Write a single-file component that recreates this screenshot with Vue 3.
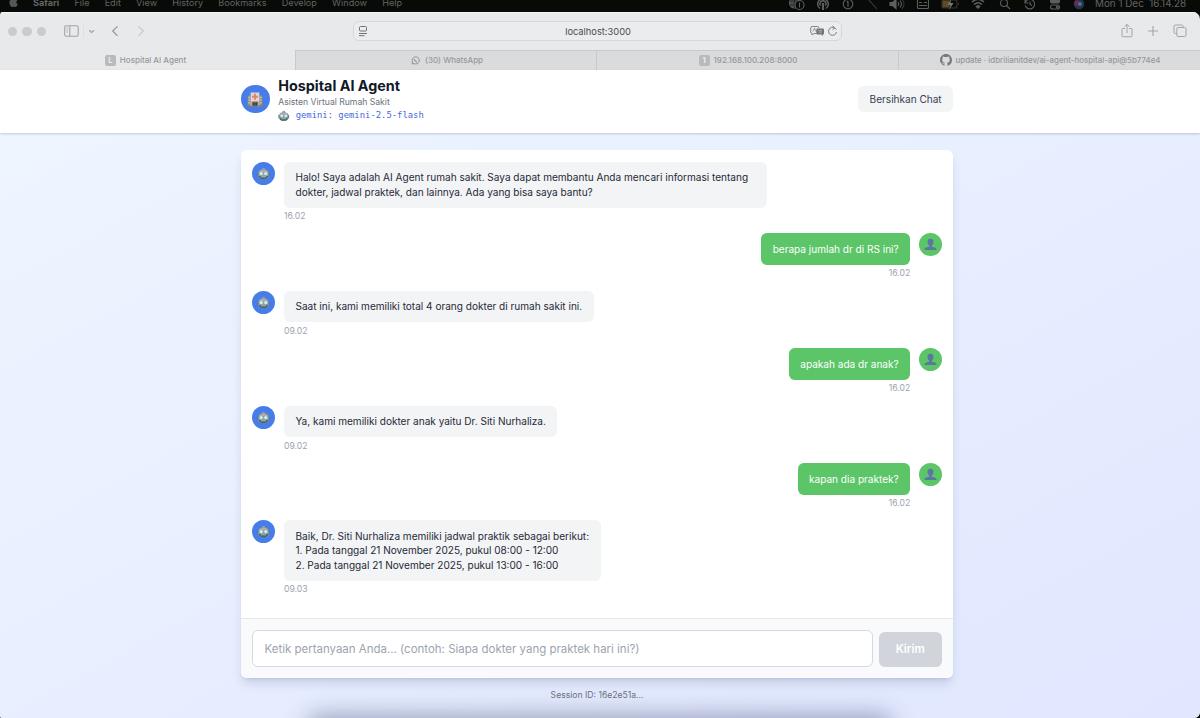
<script setup>
import { ref } from 'vue';

const menus = ['Safari', 'File', 'Edit', 'View', 'History', 'Bookmarks', 'Develop', 'Window', 'Help'];

const statusIcons = [
    { name: 'globe', width: 27 },
    { name: 'podcast', width: 26 },
    { name: 'info', width: 24 },
    { name: 'slash', width: 24 },
    { name: 'volume', width: 26 },
    { name: 'keyboard', width: 26 },
    { name: 'battery', width: 28 },
    { name: 'wifi', width: 28 },
    { name: 'search', width: 25 },
    { name: 'history', width: 25 },
    { name: 'control', width: 25 },
    { name: 'siri', width: 24 },
];

const input = ref('');

const messages = ref([
    {
        id: 0,
        from: 'bot',
        message: 'Halo! Saya adalah AI Agent rumah sakit. Saya dapat membantu Anda mencari informasi tentang dokter, jadwal praktek, dan lainnya. Ada yang bisa saya bantu?',
        time: '16.02',
    },
    { id: 1, from: 'user', message: 'berapa jumlah dr di RS ini?', time: '16.02' },
    { id: 2, from: 'bot', message: 'Saat ini, kami memiliki total 4 orang dokter di rumah sakit ini.', time: '09.02' },
    { id: 3, from: 'user', message: 'apakah ada dr anak?', time: '16.02' },
    { id: 4, from: 'bot', message: 'Ya, kami memiliki dokter anak yaitu Dr. Siti Nurhaliza.', time: '09.02' },
    { id: 5, from: 'user', message: 'kapan dia praktek?', time: '16.02' },
    {
        id: 6,
        from: 'bot',
        message: 'Baik, Dr. Siti Nurhaliza memiliki jadwal praktik sebagai berikut:\n1. Pada tanggal 21 November 2025, pukul 08:00 - 12:00\n2. Pada tanggal 21 November 2025, pukul 13:00 - 16:00',
        time: '09.03',
    },
]);

const sendMessage = () => {
    if (!input.value) return;
    messages.value.push({
        id: messages.value.length,
        from: 'user',
        message: input.value,
        time: new Date().toTimeString().slice(0, 5).replace(':', '.'),
    });
    input.value = '';
};

const clearChat = () => {
    messages.value = messages.value.slice(0, 1);
};
</script>

<template>
    <div class="screen">
        <svg class="symbols" width="0" height="0">
            <symbol id="robot" viewBox="0 0 24 24">
                <path d="M9 4.500q0-3 3-3t3 3V7H9z" fill="#a9979a" />
                <rect x=".8" y="10" width="4" height="7.500" rx="1.500" fill="#5d717c" />
                <rect x="19.200" y="10" width="4" height="7.500" rx="1.500" fill="#5d717c" />
                <path d="M2.500 12C2.500 6.500 5 4.500 12 4.500s9.500 2 9.500 7.500v3.500c0 5-2.500 7-9.500 7s-9.500-2-9.500-7z" fill="#8aa5a8" />
                <path d="M4.500 9C6 6.200 8.500 5.500 12 5.500s6 .7 7.500 3.500z" fill="#b3aeae" />
                <circle cx="7.800" cy="12.200" r="3" fill="#d3efec" />
                <circle cx="16.200" cy="12.200" r="3" fill="#d3efec" />
                <path d="M3.300 16.500h17.400c-.8 4.200-3.200 6-8.700 6s-7.900-1.800-8.700-6z" fill="#4c6067" />
                <path d="M7 16.800h10v2.400H7z" fill="#93adae" />
            </symbol>
            <symbol id="user" viewBox="0 0 24 24">
                <path d="M12 1.500c4.300 0 5.800 2.800 5.500 6.300-.2 2.700-1.500 4.800-3 5.900v2.300l6.500 2c1.600.6 2 1.700 2 4H1c0-2.300.4-3.400 2-4l6.500-2v-2.300c-1.500-1.100-2.800-3.200-3-5.900C6.200 4.300 7.700 1.500 12 1.500z" fill="#5b76a0" />
            </symbol>
        </svg>

        <div class="menubar">
            <svg class="menubar__apple" viewBox="0 0 12 14">
                <path d="M8.200 0c.1 1.500-1 2.800-2.300 2.900C5.800 1.500 7 .2 8.200 0zM6.100 3.600c.6 0 1.400-.6 2.500-.6 1.200 0 2 .7 2.500 1.400-2 1.200-1.700 4 .5 4.800C11 11 9.800 13 8.600 13c-.9 0-1.200-.5-2.300-.5S4.900 13 4.100 13C2.600 13 .5 9.600.5 6.900.5 4.400 2 3 3.800 3c1 0 1.700.6 2.300.6z" fill="#555" />
            </svg>
            <span v-for="menu in menus" :key="menu" class="menubar__item">{{ menu }}</span>
            <div class="menubar__status">
                <span v-for="icon in statusIcons" :key="icon.name" class="menubar__icon" :style="{ width: icon.width + 'px' }">
                    <svg width="20" height="14" viewBox="0 0 20 14" fill="none" stroke="#5e5e5e" stroke-width="1.100">
                        <g v-if="icon.name === 'globe'">
                            <circle cx="7.500" cy="6" r="5" fill="#4a4a4a" />
                            <path d="M3 4h9M3 8h9M7.500 1v10" stroke="#111" stroke-width=".6" />
                            <circle cx="12.500" cy="8" r="4.500" fill="#080a07" />
                            <path d="M12.500 5.500v5" />
                        </g>
                        <g v-else-if="icon.name === 'podcast'">
                            <path d="M7 11.500A5.300 5.300 0 1 1 13 11.500M7.700 8.500a2.900 2.900 0 1 1 4.600 0" stroke-width="1.500" />
                            <path d="M10 6v7" stroke-width="2.200" />
                        </g>
                        <g v-else-if="icon.name === 'info'">
                            <circle cx="10" cy="7" r="4.800" />
                            <path d="M10 4v6M8.800 5l1.200-1" />
                        </g>
                        <path v-else-if="icon.name === 'slash'" d="M6 2l9 10" stroke="#3a3a3a" />
                        <g v-else-if="icon.name === 'volume'">
                            <path d="M3 5.500h2.500l3.500-3v9L5.500 8.500H3z" fill="#5e5e5e" />
                            <path d="M11 5q1.500 2 0 4M13 3.500q2.800 3.500 0 7" />
                            <path d="M15 2q4 5 0 10" stroke="#333" />
                        </g>
                        <g v-else-if="icon.name === 'keyboard'">
                            <rect x="4.500" y="2.500" width="11" height="9" rx="1" />
                            <path d="M6 5.500h3M11 5.500h3M6 8.500h8" />
                        </g>
                        <g v-else-if="icon.name === 'battery'">
                            <rect x="2" y="3" width="15" height="8" rx="2" stroke="#333" />
                            <rect x="2.500" y="3.500" width="7" height="7" fill="#5d4b24" stroke="none" />
                            <path d="M11 2L7.500 8h3L9 13l4.500-7h-3z" fill="#777" stroke="none" />
                            <path d="M18.500 6v2" stroke="#333" />
                        </g>
                        <path v-else-if="icon.name === 'wifi'" d="M4 5q6-5.500 12 0M6 7.500q4-3.500 8 0M8.500 9.500q1.500-1.500 3 0L10 11z" stroke-width="1.500" />
                        <g v-else-if="icon.name === 'search'">
                            <circle cx="9" cy="6" r="3.500" />
                            <path d="M11.500 8.500l3.500 3.500" />
                        </g>
                        <g v-else-if="icon.name === 'history'">
                            <path d="M5.500 5a4.800 4.800 0 1 1-.3 3.500M5 2.500V6h3.300" />
                            <path d="M10 4.500v3l2 1" />
                        </g>
                        <g v-else-if="icon.name === 'control'">
                            <rect x="5.500" y="2" width="9" height="4" rx="2" fill="#5e5e5e" />
                            <rect x="5.500" y="8" width="9" height="4" rx="2" />
                            <circle cx="12.300" cy="10" r="1" />
                        </g>
                        <g v-else stroke="none">
                            <circle cx="10" cy="7" r="5.200" fill="#27334e" />
                            <circle cx="8" cy="6" r="2.800" fill="#652e4c" />
                            <circle cx="11" cy="7" r="2" fill="#48708a" />
                        </g>
                    </svg>
                </span>
                <span class="menubar__clock">Mon 1 Dec&nbsp; 16.14.28</span>
            </div>
        </div>

        <div class="window">
            <div class="toolbar">
                <div class="toolbar__left">
                    <i class="dot"></i>
                    <i class="dot"></i>
                    <i class="dot"></i>
                    <svg class="toolbar__nav" width="90" height="16" viewBox="0 0 90 16" fill="none" stroke="#a3a4a6" stroke-width="1.100">
                        <rect x=".7" y="2.700" width="13.500" height="10.600" rx="1.500" />
                        <path d="M5.800 3v10" />
                        <path d="M2.400 5h1.700M2.400 7h1.700M2.400 9h1.700" stroke-width=".7" />
                        <path d="M19.500 1v14" stroke="#dcdddf" stroke-width=".8" />
                        <path d="M25.200 7.200l2.400 2.200 2.400-2.200" stroke-width="1.300" />
                        <path d="M53.500 3.300L48.700 8l4.800 4.800" stroke="#8f9092" stroke-width="1.100" />
                        <path d="M74.500 3.300L79.300 8l-4.800 4.800" stroke="#c6c7c9" stroke-width="1.100" />
                    </svg>
                </div>
                <div class="address">
                    <svg width="10" height="12" viewBox="0 0 10 12" fill="none" stroke="#717274">
                        <rect x="1.500" y="1.500" width="7" height="4.500" rx="1" />
                        <path d="M1 8.500h8M1 10.700h5.500" />
                    </svg>
                    <span class="address__url">localhost:3000</span>
                    <svg width="28" height="12" viewBox="0 0 28 12" fill="none" stroke="#7a7b7d">
                        <path d="M6.500 8.500H4L2 10V8.500A1.500 1.500 0 0 1 .700 7V3A1.500 1.500 0 0 1 2 1.500h5.500A1.300 1.300 0 0 1 8.800 3" stroke-width=".9" />
                        <path d="M3 6.500l1.500-3.500L6 6.500" stroke-width=".7" />
                        <path d="M7.500 3.500h5.300q1.200 0 1.200 1.200v3.600q0 1.200-1.200 1.200V11l-1.600-1.500H7.500q-1.200 0-1.200-1.200V4.700q0-1.200 1.200-1.200z" fill="#717274" stroke="none" />
                        <path d="M8 5.500h4.500M10.200 4.500v1M8.500 8.300q2.500-.8 3-2.800M9 6q.6 1.700 3 2.300" stroke="#bfc0c2" stroke-width=".5" />
                        <path d="M26.200 4.600A4 4 0 1 0 26.500 7M22.500.8l2.200 2-2.200 2" />
                    </svg>
                </div>
                <div class="toolbar__right">
                    <svg width="12" height="16" viewBox="0 0 12 16" fill="none" stroke="#a3a4a6">
                        <path d="M4 5.500H1.700Q1 5.500 1 6.300v6.500q0 1 .9 1h8.200q.9 0 .9-1V6.300q0-.8-.8-.8H8M6 10V1.500M3.600 3.700L6 1.300l2.400 2.400" />
                    </svg>
                    <svg width="12" height="16" viewBox="0 0 12 16" fill="none" stroke="#a3a4a6" stroke-width="1.100">
                        <path d="M6 3v10M1 8h10" />
                    </svg>
                    <svg width="14" height="16" viewBox="0 0 14 16" fill="none" stroke="#a3a4a6">
                        <path d="M3.500 10.500H2.300Q1 10.500 1 9.200V3.300Q1 2 2.300 2h6.400Q10 2 10 3.300v1" />
                        <rect x="3.800" y="4.500" width="9.200" height="9" rx="1.400" />
                    </svg>
                </div>
            </div>

            <div class="tabs">
                <div class="tab tab--active">
                    <span class="tab__badge">L</span>
                    <span class="tab__title">Hospital AI Agent</span>
                </div>
                <div class="tab tab--whatsapp">
                    <svg width="9" height="9" viewBox="0 0 9 9" fill="none" stroke="#949597">
                        <path d="M1 8l.6-1.800a3.600 3.600 0 1 1 1.300 1.300z" />
                        <path d="M3.100 3q.3 2.300 2.800 3" stroke-width="1.300" />
                    </svg>
                    <span class="tab__title">(30) WhatsApp</span>
                </div>
                <div class="tab tab--ip">
                    <span class="tab__badge">1</span>
                    <span class="tab__title">192.168.100.208:8000</span>
                </div>
                <div class="tab tab--github">
                    <svg width="12" height="12" viewBox="0 0 16 16" fill="#77787a">
                        <path d="M8 0C3.580 0 0 3.580 0 8c0 3.540 2.290 6.530 5.470 7.590.4.070.55-.17.55-.38 0-.19-.01-.82-.01-1.490-2.010.37-2.530-.49-2.690-.94-.09-.23-.48-.94-.82-1.130-.28-.15-.68-.52-.01-.53.63-.01 1.080.58 1.230.82.72 1.210 1.870.87 2.330.66.070-.52.280-.87.510-1.070-1.780-.2-3.640-.89-3.640-3.950 0-.87.31-1.590.82-2.150-.08-.2-.36-1.020.08-2.120 0 0 .67-.21 2.200.82.64-.18 1.320-.27 2-.27s1.360.09 2 .27c1.530-1.040 2.200-.82 2.200-.82.44 1.100.16 1.920.08 2.120.51.56.82 1.270.82 2.150 0 3.070-1.870 3.750-3.650 3.950.29.25.54.73.54 1.480 0 1.070-.01 1.930-.01 2.200 0 .21.15.46.55.38A8.010 8.010 0 0 0 16 8c0-4.420-3.580-8-8-8z" />
                    </svg>
                    <span class="tab__title">update · idbrilianitdev/ai-agent-hospital-api@5b774e4</span>
                </div>
            </div>

            <div class="page">
                <header class="header">
                    <div class="header__inner">
                        <div class="header__logo">
                            <svg viewBox="0 0 24 24">
                                <path d="M1 6h6v16H1zM17 6h6v16h-6z" fill="#8f8d8c" />
                                <path d="M5.500 1.500h13V22h-13z" fill="#ddd6d2" />
                                <path d="M2 8h2.500v2H2zM2 12h2.500v2H2zM2 16h2.500v2H2zM19.500 8H22v2h-2.500zM19.500 12H22v2h-2.500zM19.500 16H22v2h-2.500z" fill="#d2c59f" />
                                <path d="M10.500 3.500h3v3h3v3h-3v3h-3v-3h-3v-3h3z" fill="#e08476" />
                                <path d="M7 15h10v7H7z" fill="#766d5c" />
                                <path d="M9 17h2.500v5H9zM12.500 17H15v5h-2.500z" fill="#31444d" />
                                <path d="M0 21h24v1.500H0z" fill="#87796a" />
                            </svg>
                        </div>
                        <div class="header__text">
                            <h1 class="header__title">Hospital AI Agent</h1>
                            <p class="header__subtitle">Asisten Virtual Rumah Sakit</p>
                            <p class="header__model">
                                <svg><use href="#robot" /></svg>
                                <span>gemini: gemini-2.5-flash</span>
                            </p>
                        </div>
                        <button class="header__clear" @click="clearChat">Bersihkan Chat</button>
                    </div>
                </header>

                <main class="content">
                    <div class="chat">
                        <div class="chat__messages">
                            <div v-for="message in messages" :key="message.id" class="message" :class="'message--' + message.from">
                                <div class="message__avatar">
                                    <svg><use :href="message.from === 'bot' ? '#robot' : '#user'" /></svg>
                                </div>
                                <div class="message__body">
                                    <p class="message__text">{{ message.message }}</p>
                                    <span class="message__time">{{ message.time }}</span>
                                </div>
                            </div>
                        </div>
                        <form class="chat__form" @submit.prevent="sendMessage">
                            <input v-model.trim="input" class="chat__input" type="text"
                                placeholder="Ketik pertanyaan Anda... (contoh: Siapa dokter yang praktek hari ini?)">
                            <button class="chat__send" :disabled="!input">Kirim</button>
                        </form>
                    </div>
                    <p class="session">Session ID: 16e2e51a...</p>
                </main>
            </div>
        </div>
        <div class="dock-shadow"></div>
    </div>
</template>

<style>
html {
    font-size: 11.488px;
}

body {
    background: #080a07;
    overflow: hidden;
}
</style>

<style scoped>
* {
    box-sizing: border-box;
}

h1,
p {
    margin: 0;
}

button,
input {
    font-family: inherit;
}

svg {
    flex: none;
}

.screen {
    position: relative;
    display: flex;
    flex-direction: column;
    width: 1200px;
    height: 718px;
    overflow: hidden;
    background: #080a07;
    font-family: Inter, "Liberation Sans", sans-serif;
}

.symbols {
    position: absolute;
}

.menubar {
    display: flex;
    align-items: flex-start;
    flex: none;
    height: 12px;
    padding: 0 12px 0 9px;
    color: #636463;
    font-size: 9.1px;
    line-height: 12px;
}

.menubar__apple {
    width: 9px;
    height: 11px;
    margin: -3px 15px 0 0;
}

.menubar__item {
    margin: -3px 15.2px 0 0;
}

.menubar__apple + .menubar__item {
    font-weight: 700;
}

.menubar__status {
    display: flex;
    margin: -3px 0 0 auto;
}

.menubar__icon {
    display: flex;
    justify-content: center;
}

.menubar__clock {
    width: 93px;
    margin-left: 4px;
    font-size: 9.9px;
    white-space: nowrap;
}

.window {
    display: flex;
    flex: 1;
    flex-direction: column;
    min-height: 0;
    overflow: hidden;
    border-radius: 3px 7px 6px 2px;
    background: #e8e9eb;
}

.toolbar {
    display: grid;
    grid-template-columns: 353px 489px 1fr;
    align-items: center;
    flex: none;
    height: 37.500px;
    border-top: 1px solid #f6f6f7;
}

.toolbar__left {
    display: flex;
    align-items: center;
    gap: 5px;
    padding-left: 8px;
}

.dot {
    width: 9.400px;
    height: 9.400px;
    border-radius: 50%;
    background: #cbcbcc;
}

.toolbar__nav {
    width: 90px;
    margin-left: 13px;
}

.address {
    display: flex;
    align-items: center;
    justify-content: space-between;
    height: 20px;
    padding: 0 3px 0 4px;
    border: 1px solid #d6d7d9;
    border-radius: 6px;
    background: #ebecee;
}

.address__url {
    margin-left: 18px;
    color: #4c4d4f;
    font-size: 9.3px;
}

.toolbar__right {
    display: flex;
    justify-content: flex-end;
    gap: 14px;
    padding-right: 13.5px;
}

.tabs {
    display: grid;
    grid-template-columns: 295px 301px 302px 302px;
    flex: none;
    height: 20.500px;
}

.tab {
    display: flex;
    align-items: center;
    justify-content: center;
    gap: 5px;
    border-top: 1px solid #c8c9cb;
    border-left: 1px solid #c8c9cb;
    background: #dadbdd;
    color: #97989a;
    font-size: 8px;
    font-weight: 500;
    white-space: nowrap;
}

.tab--active {
    gap: 4px;
    padding-right: 5px;
    border-color: transparent;
    background: none;
}

.tab--whatsapp {
    padding-left: 2px;
}

.tab--ip,
.tab--github {
    gap: 4px;
    padding-left: 1px;
}

.tab--github {
    font-size: 7.9px;
}

.tab__badge {
    width: 11px;
    height: 11px;
    border-radius: 2px;
    background: #b9babc;
    color: #eee;
    font-size: 7.5px;
    font-weight: 700;
    line-height: 11px;
    text-align: center;
}

.page {
    display: flex;
    flex: 1;
    flex-direction: column;
    background: linear-gradient(to bottom right, #eff6ff, #e0e7ff);
}

.header {
    display: flex;
    justify-content: center;
    flex: none;
    height: 63px;
    padding: 0 6px 5px 0;
    background: #fff;
    box-shadow: 0 1px 2px rgba(40, 50, 80, 0.22);
}

.header__inner {
    display: flex;
    align-items: center;
    width: 62rem;
}

.header__logo {
    display: flex;
    align-items: center;
    justify-content: center;
    width: 2.5rem;
    height: 2.5rem;
    margin-right: 0.75rem;
    border-radius: 50%;
    background: #467de9;
}

.header__logo svg {
    width: 16px;
    height: 17px;
}

.header__title {
    color: #111827;
    font-size: 1.25rem;
    font-weight: 700;
    line-height: 1.75rem;
}

.header__subtitle {
    padding-top: 0.5px;
    color: #6b7280;
    font-size: 0.75rem;
    line-height: 1rem;
}

.header__model {
    display: flex;
    align-items: center;
    gap: 6px;
    margin-top: 0.125rem;
    color: #4568dc;
    font-family: "DejaVu Sans Mono", "Liberation Mono", monospace;
    font-size: 8.87px;
    line-height: 1rem;
}

.header__model svg {
    width: 11.5px;
    height: 11.5px;
}

.header__clear {
    height: 26px;
    margin-left: auto;
    padding: 0 1rem;
    border: 0;
    border-radius: 0.5rem;
    background: #f3f4f6;
    color: #374151;
    font-size: 0.875rem;
}

.content {
    display: flex;
    flex: 1;
    flex-direction: column;
    align-items: center;
    padding: 17px 5.8px 0 0;
}

.chat {
    display: flex;
    flex-direction: column;
    width: 62rem;
    height: 528px;
    overflow: hidden;
    border-radius: 0.5rem;
    background: #fff;
    box-shadow: 0 7px 11px -2px rgba(40, 50, 90, 0.16), 0 3px 4px -3px rgba(40, 50, 90, 0.16);
}

.chat__messages {
    flex: 1;
    padding: 11.7px 1rem 0;
}

.message {
    display: flex;
    align-items: flex-start;
    gap: 0.75rem;
    margin-bottom: 0.95rem;
}

.message--user {
    flex-direction: row-reverse;
}

.message__avatar {
    display: flex;
    align-items: center;
    justify-content: center;
    width: 2rem;
    height: 2rem;
    border-radius: 50%;
    background: #467de9;
}

.message--user .message__avatar {
    background: #5bc568;
}

.message__avatar svg {
    width: 13px;
    height: 13px;
}

.message__body {
    display: flex;
    flex-direction: column;
    align-items: flex-start;
    max-width: 42rem;
}

.message--user .message__body {
    align-items: flex-end;
}

.message__text {
    padding: 0.75rem 1rem;
    border-radius: 0.5rem;
    background: #f3f4f6;
    color: #1f2937;
    font-size: 0.875rem;
    line-height: 1.25rem;
    white-space: pre-line;
}

.message--user .message__text {
    background: #5bc568;
    color: #fff;
}

.message__time {
    margin-top: 0.3rem;
    color: #9ca3af;
    font-size: 0.75rem;
    line-height: 1rem;
}

.chat__form {
    display: flex;
    align-items: flex-end;
    gap: 6px;
    height: 60px;
    padding: 0 1rem 1rem;
    border-top: 1px solid #e5e7eb;
    background: #f9fafb;
}

.chat__input {
    flex: 1;
    height: 36.500px;
    padding: 1px 11px 0;
    border: 1px solid #d5d8de;
    border-radius: 0.5rem;
    outline: none;
    background: #fff;
    font-size: 1rem;
}

.chat__input::placeholder {
    color: #9ca3af;
    opacity: 1;
}

.chat__send {
    width: 63px;
    height: 34.500px;
    padding: 0;
    border: 0;
    border-radius: 0.5rem;
    background: #3b82f6;
    color: #fff;
    font-size: 1rem;
    font-weight: 600;
}

.chat__send:disabled {
    background: #d1d5db;
}

.session {
    margin-top: 12px;
    color: #6b7280;
    font-size: 0.75rem;
    line-height: 1rem;
}

/* shadow of the dock, just under the bottom edge of the screen */
.dock-shadow {
    position: absolute;
    left: 314px;
    top: 720px;
    width: 572px;
    height: 20px;
    box-shadow: 0 0 24px 4px rgba(50, 55, 90, 0.45);
}
</style>
